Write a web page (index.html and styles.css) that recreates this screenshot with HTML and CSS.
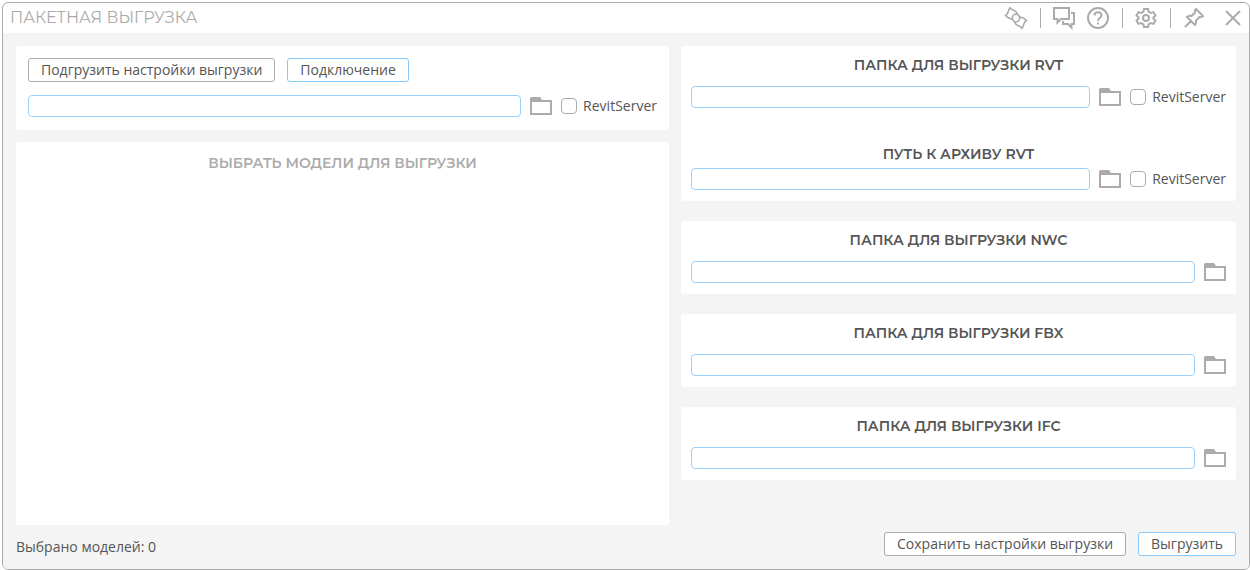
FILE: index.html
```
<!DOCTYPE html>
<html lang="ru">
<head>
  <meta charset="UTF-8">
  <meta name="viewport" content="width=device-width, initial-scale=1.0">
  <title>Пакетная выгрузка</title>
  <link rel="stylesheet" href="styles.css">
</head>
<body>
  <svg class="sprite" aria-hidden="true">
    <symbol id="folder" viewBox="0 0 22 18">
      <path d="M1 16V4h20v13H1z" fill="none" stroke="#ababab" stroke-width="2"/>
      <path d="M0 5V1.500Q0 0 1.500 0h8.500l2 3h9.500l.5 2z" fill="#ababab"/>
    </symbol>
  </svg>

  <div class="window">
    <header class="titlebar">
      <h1>ПАКЕТНАЯ ВЫГРУЗКА</h1>
      <div class="toolbar">
        <button type="button" class="btn-icon btn-candy" aria-label="Плагин">
          <svg viewBox="0 0 24 24">
            <circle cx="12" cy="12" r="3.700"/>
            <path d="M9 14C7.500 11.500 4.500 13.500 1.500 9.500C4.500 8.500 4 4 6 1.800C8.500 5.500 12 3 13.500 8.300"/>
            <path d="M15 10C16.500 12.500 19.500 10.500 22.500 14.500C19.500 15.500 20 20 18 22.200C15.500 18.500 12 21 10.500 15.700"/>
          </svg>
        </button>
        <span class="separator"></span>
        <button type="button" class="btn-icon" aria-label="Сообщения">
          <svg viewBox="0 0 24 24">
            <path d="M2 2h15v11H9l-3.500 3.500V13H2z"/>
            <path d="M19 7h3v11h-2.500v3.500L16 18h-5v-3"/>
          </svg>
        </button>
        <button type="button" class="btn-icon btn-help" aria-label="Справка">
          <svg viewBox="0 0 24 24">
            <circle cx="12" cy="12" r="10"/>
            <path d="M8.500 9.500C8.500 5 15.500 5 15.500 9.500C15.500 12 12 11.500 12 15M12 16.500v2"/>
          </svg>
        </button>
        <span class="separator"></span>
        <button type="button" class="btn-icon" aria-label="Настройки">
          <svg viewBox="0 0 24 24">
            <path d="M10 3h4l.6 2.700 2.200 1.300 2.700-.9 2 3.400-2.100 1.900v1.200l2.100 1.900-2 3.400-2.700-.9-2.200 1.300L14 21h-4l-.6-2.700L7.200 17l-2.700.9-2-3.400 2.100-1.900v-1.200L2.500 9.500l2-3.400 2.700.9 2.200-1.300z"/>
            <circle cx="12" cy="12" r="3"/>
          </svg>
        </button>
        <span class="separator"></span>
        <button type="button" class="btn-icon" aria-label="Закрепить">
          <svg viewBox="0 0 24 24">
            <path d="M14 3l7 7-1.500 1h-2L14 14.500c.5 2 0 3.500-1 4.500L5 11c1.500-1 3-1.500 4.500-1L13 6.500v-2zM9 15l-6 6"/>
          </svg>
        </button>
        <button type="button" class="btn-icon btn-close" aria-label="Закрыть">
          <svg viewBox="0 0 24 24"><path d="M5 5l14 14M19 5L5 19"/></svg>
        </button>
      </div>
    </header>

    <main class="content">
      <div class="columns">
        <div class="column-left">
          <section class="card settings">
            <div class="buttons">
              <button type="button" class="btn">Подгрузить настройки выгрузки</button>
              <button type="button" class="btn btn-primary">Подключение</button>
            </div>
            <div class="row">
              <input type="text" class="path" aria-label="Папка с моделями">
              <button type="button" class="btn-folder" aria-label="Обзор"><svg><use href="#folder"/></svg></button>
              <label class="check"><input type="checkbox">RevitServer</label>
            </div>
          </section>
          <section class="card models">
            <h2>ВЫБРАТЬ МОДЕЛИ ДЛЯ ВЫГРУЗКИ</h2>
          </section>
        </div>

        <div class="column-right">
          <section class="card folders">
            <h2><label for="rvt">ПАПКА ДЛЯ ВЫГРУЗКИ RVT</label></h2>
            <div class="row">
              <input type="text" class="path" id="rvt">
              <button type="button" class="btn-folder" aria-label="Обзор"><svg><use href="#folder"/></svg></button>
              <label class="check"><input type="checkbox">RevitServer</label>
            </div>
            <h2 class="archive"><label for="archive">ПУТЬ К АРХИВУ RVT</label></h2>
            <div class="row">
              <input type="text" class="path" id="archive">
              <button type="button" class="btn-folder" aria-label="Обзор"><svg><use href="#folder"/></svg></button>
              <label class="check"><input type="checkbox">RevitServer</label>
            </div>
          </section>
          <section class="card folders">
            <h2><label for="nwc">ПАПКА ДЛЯ ВЫГРУЗКИ NWC</label></h2>
            <div class="row">
              <input type="text" class="path" id="nwc">
              <button type="button" class="btn-folder" aria-label="Обзор"><svg><use href="#folder"/></svg></button>
            </div>
          </section>
          <section class="card folders">
            <h2><label for="fbx">ПАПКА ДЛЯ ВЫГРУЗКИ FBX</label></h2>
            <div class="row">
              <input type="text" class="path" id="fbx">
              <button type="button" class="btn-folder" aria-label="Обзор"><svg><use href="#folder"/></svg></button>
            </div>
          </section>
          <section class="card folders">
            <h2><label for="ifc">ПАПКА ДЛЯ ВЫГРУЗКИ IFC</label></h2>
            <div class="row">
              <input type="text" class="path" id="ifc">
              <button type="button" class="btn-folder" aria-label="Обзор"><svg><use href="#folder"/></svg></button>
            </div>
          </section>
        </div>
      </div>

      <footer class="footer">
        <p>Выбрано моделей: 0</p>
        <div class="buttons">
          <button type="button" class="btn">Сохранить настройки выгрузки</button>
          <button type="button" class="btn btn-primary">Выгрузить</button>
        </div>
      </footer>
    </main>
  </div>
</body>
</html>
```
FILE: styles.css
```
* {
  box-sizing: border-box;
}
body {
  display: flex;
  min-height: 100vh;
  margin: 0;
  padding: 2px 0 0 2px;
  background-color: #ffffff;
  font-family: "Open Sans", "Noto Sans", sans-serif;
  font-size: 14px;
  line-height: 18px;
  color: #555555;
}
h1, h2, p {
  margin: 0;
}
h1, h2 {
  font-family: Montserrat, Inter, sans-serif;
}
h1 {
  font-size: 16px;
  font-weight: 400;
  color: #ababab;
}
h2 {
  font-size: 14px;
  font-weight: 600;
  line-height: 18px;
  text-align: center;
}
.sprite {
  display: none;
}
.window {
  flex: 1;
  display: flex;
  flex-direction: column;
  border: 1px solid #ababab;
  border-radius: 6px;
  overflow: hidden;
}
.titlebar {
  display: flex;
  align-items: center;
  justify-content: space-between;
  height: 30px;
  padding: 0 4px 0 7px;
}
.toolbar {
  display: flex;
  align-items: center;
}
.separator {
  width: 1px;
  height: 20px;
  margin: 0 11px 0 12px;
  background-color: #ababab;
}
.btn-icon {
  width: 24px;
  height: 24px;
  padding: 0;
  border: none;
  background: none;
  cursor: pointer;
}
.btn-icon svg {
  display: block;
  width: 24px;
  height: 24px;
  fill: none;
  stroke: #ababab;
  stroke-width: 2;
}
.btn-candy svg {
  stroke-width: 1.600;
}
.btn-help {
  margin-left: 10px;
}
.btn-close {
  margin-left: 15px;
}
.content {
  flex: 1;
  display: flex;
  flex-direction: column;
  gap: 7px;
  padding: 13px;
  background-color: #f4f4f4;
}
.columns {
  flex: 1;
  display: flex;
  gap: 12px;
}
.column-left {
  flex: 20;
  display: flex;
  flex-direction: column;
  gap: 12px;
}
.column-right {
  flex: 17;
  display: flex;
  flex-direction: column;
  gap: 20px;
}
.card {
  border-radius: 3px;
  background-color: #ffffff;
}
.settings {
  display: flex;
  flex-direction: column;
  gap: 13px;
  padding: 12px 12px 13px;
}
.models {
  flex: 1;
  padding: 12px;
}
.models h2 {
  color: #ababab;
}
.folders {
  padding: 10px 10px 11px;
}
.folders .row {
  margin-top: 12px;
}
.folders .archive {
  margin-top: 37px;
}
.folders .archive + .row {
  margin-top: 5px;
}
.row {
  display: flex;
  align-items: center;
  gap: 9px;
}
.path {
  flex: 1;
  min-width: 0;
  height: 22px;
  padding: 0 6px;
  border: 1px solid #9bd1f8;
  border-radius: 4px;
  background-color: #ffffff;
  font: inherit;
  color: inherit;
}
.btn-folder {
  padding: 0;
  border: none;
  background: none;
  cursor: pointer;
}
.btn-folder svg {
  display: block;
  width: 22px;
  height: 18px;
}
.check {
  display: flex;
  align-items: center;
  gap: 6px;
}
.check input {
  appearance: none;
  width: 16px;
  height: 16px;
  margin: 0;
  border: 1px solid #ababab;
  border-radius: 4px;
  background-color: #ffffff;
}
.check input:checked {
  background-color: #85c8f9;
}
.buttons {
  display: flex;
  gap: 12px;
}
.btn {
  height: 24px;
  padding: 0 12px;
  border: 1px solid #ababab;
  border-radius: 3px;
  background-color: #ffffff;
  font: inherit;
  color: inherit;
  cursor: pointer;
}
.btn-primary {
  border-color: #85c8f9;
}
.btn:hover {
  background-color: #f4f4f4;
}
.footer {
  display: flex;
  align-items: flex-end;
  justify-content: space-between;
}
```
